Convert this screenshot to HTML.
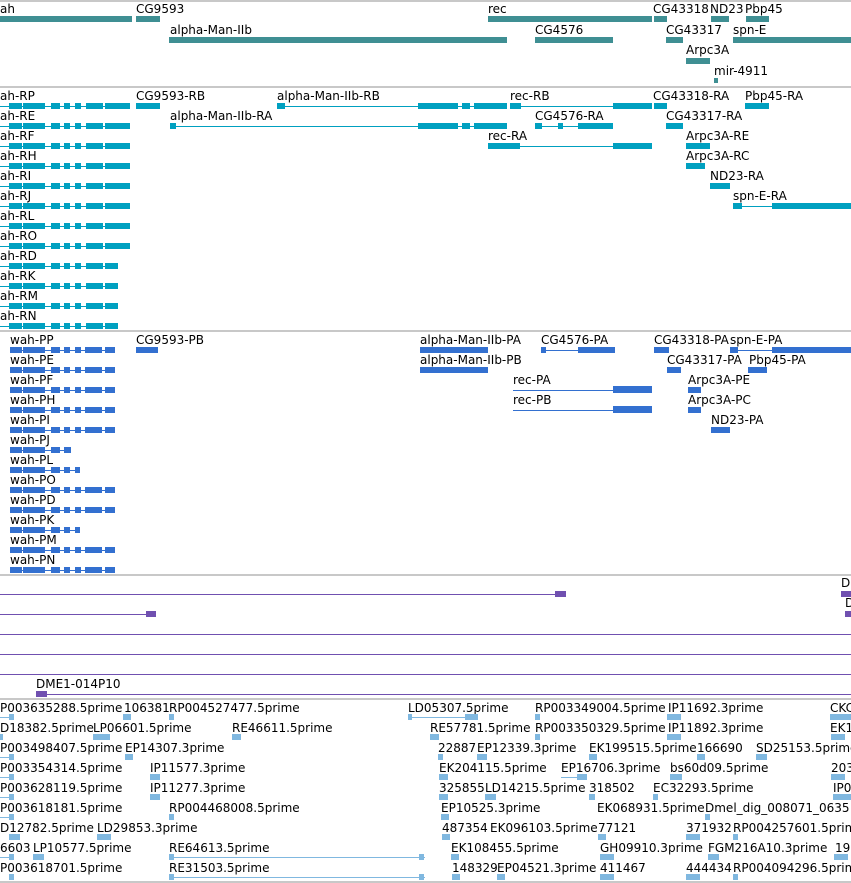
<!DOCTYPE html>
<html><head><meta charset="utf-8"><style>
body{margin:0;width:851px;height:883px;background:#fff;position:relative;overflow:hidden;font-family:"DejaVu Sans","Liberation Sans",sans-serif}
span{position:absolute;font-size:12px;line-height:14px;white-space:nowrap;color:#000}
i,u,hr{position:absolute;display:block;margin:0;border:0}
i{height:6px}
u{height:1px}
hr{height:2px;background:#c8c8c8;left:0;width:851px}
.a{background:#3f8f93}.b{background:#00a0c0}.c{background:#3370d0}.d{background:#7050b0}.e{background:#80b8e0}
</style></head><body>
<hr style="top:0">
<!-- section 1 genes -->
<span style="left:0;top:2px">ah</span><i class="a" style="left:0;top:16px;width:132px"></i>
<span style="left:136px;top:2px">CG9593</span><i class="a" style="left:136px;top:16px;width:24px"></i>
<span style="left:488px;top:2px">rec</span><i class="a" style="left:488px;top:16px;width:164px"></i>
<span style="left:653px;top:2px">CG43318</span><i class="a" style="left:654px;top:16px;width:13px"></i>
<span style="left:710px;top:2px">ND23</span><i class="a" style="left:711px;top:16px;width:18px"></i>
<span style="left:745px;top:2px">Pbp45</span><i class="a" style="left:746px;top:16px;width:23px"></i>
<span style="left:170px;top:23px">alpha-Man-IIb</span><i class="a" style="left:169px;top:37px;width:338px"></i>
<span style="left:535px;top:23px">CG4576</span><i class="a" style="left:535px;top:37px;width:78px"></i>
<span style="left:666px;top:23px">CG43317</span><i class="a" style="left:666px;top:37px;width:17px"></i>
<span style="left:733px;top:23px">spn-E</span><i class="a" style="left:733px;top:37px;width:118px"></i>
<span style="left:686px;top:43px">Arpc3A</span><i class="a" style="left:686px;top:58px;width:24px"></i>
<span style="left:714px;top:64px">mir-4911</span><i class="a" style="left:714px;top:78px;width:4px;height:5px"></i>
<hr style="top:86px">
<!-- section 2 transcripts -->
<span style="left:0;top:89px">ah-RP</span>
<span style="left:0;top:109px">ah-RE</span>
<span style="left:0;top:129px">ah-RF</span>
<span style="left:0;top:149px">ah-RH</span>
<span style="left:0;top:169px">ah-RI</span>
<span style="left:0;top:189px">ah-RJ</span>
<span style="left:0;top:209px">ah-RL</span>
<span style="left:0;top:229px">ah-RO</span>
<span style="left:0;top:249px">ah-RD</span>
<span style="left:0;top:269px">ah-RK</span>
<span style="left:0;top:289px">ah-RM</span>
<span style="left:0;top:309px">ah-RN</span>
<!-- ah glyph rows -->
<div style="position:absolute;left:0;top:103px">
<u class="b" style="left:0;top:3px;width:130px"></u><i class="b" style="left:9px;width:13px"></i><i class="b" style="left:23px;width:22px"></i><i class="b" style="left:51px;width:9px"></i><i class="b" style="left:64px;width:6px"></i><i class="b" style="left:75px;width:6px"></i><i class="b" style="left:86px;width:17px"></i><i class="b" style="left:105px;width:25px"></i>
<u class="b" style="left:0;top:23px;width:130px"></u><i class="b" style="top:20px;left:9px;width:13px"></i><i class="b" style="top:20px;left:23px;width:22px"></i><i class="b" style="top:20px;left:51px;width:9px"></i><i class="b" style="top:20px;left:64px;width:6px"></i><i class="b" style="top:20px;left:75px;width:6px"></i><i class="b" style="top:20px;left:86px;width:17px"></i><i class="b" style="top:20px;left:105px;width:25px"></i>
<u class="b" style="left:0;top:43px;width:130px"></u><i class="b" style="top:40px;left:9px;width:13px"></i><i class="b" style="top:40px;left:23px;width:22px"></i><i class="b" style="top:40px;left:51px;width:9px"></i><i class="b" style="top:40px;left:64px;width:6px"></i><i class="b" style="top:40px;left:75px;width:6px"></i><i class="b" style="top:40px;left:86px;width:17px"></i><i class="b" style="top:40px;left:105px;width:25px"></i>
<u class="b" style="left:0;top:63px;width:130px"></u><i class="b" style="top:60px;left:9px;width:13px"></i><i class="b" style="top:60px;left:23px;width:22px"></i><i class="b" style="top:60px;left:51px;width:9px"></i><i class="b" style="top:60px;left:64px;width:6px"></i><i class="b" style="top:60px;left:75px;width:6px"></i><i class="b" style="top:60px;left:86px;width:17px"></i><i class="b" style="top:60px;left:105px;width:25px"></i>
<u class="b" style="left:0;top:83px;width:130px"></u><i class="b" style="top:80px;left:9px;width:13px"></i><i class="b" style="top:80px;left:23px;width:22px"></i><i class="b" style="top:80px;left:51px;width:9px"></i><i class="b" style="top:80px;left:64px;width:6px"></i><i class="b" style="top:80px;left:75px;width:6px"></i><i class="b" style="top:80px;left:86px;width:17px"></i><i class="b" style="top:80px;left:105px;width:25px"></i>
<u class="b" style="left:0;top:103px;width:130px"></u><i class="b" style="top:100px;left:9px;width:13px"></i><i class="b" style="top:100px;left:23px;width:22px"></i><i class="b" style="top:100px;left:51px;width:9px"></i><i class="b" style="top:100px;left:64px;width:6px"></i><i class="b" style="top:100px;left:75px;width:6px"></i><i class="b" style="top:100px;left:86px;width:17px"></i><i class="b" style="top:100px;left:105px;width:25px"></i>
<u class="b" style="left:0;top:123px;width:130px"></u><i class="b" style="top:120px;left:9px;width:13px"></i><i class="b" style="top:120px;left:23px;width:22px"></i><i class="b" style="top:120px;left:51px;width:9px"></i><i class="b" style="top:120px;left:64px;width:6px"></i><i class="b" style="top:120px;left:75px;width:6px"></i><i class="b" style="top:120px;left:86px;width:17px"></i><i class="b" style="top:120px;left:105px;width:25px"></i>
<u class="b" style="left:0;top:143px;width:130px"></u><i class="b" style="top:140px;left:9px;width:13px"></i><i class="b" style="top:140px;left:23px;width:22px"></i><i class="b" style="top:140px;left:51px;width:9px"></i><i class="b" style="top:140px;left:64px;width:6px"></i><i class="b" style="top:140px;left:75px;width:6px"></i><i class="b" style="top:140px;left:86px;width:17px"></i><i class="b" style="top:140px;left:105px;width:25px"></i>
<u class="b" style="left:0;top:163px;width:118px"></u><i class="b" style="top:160px;left:9px;width:13px"></i><i class="b" style="top:160px;left:23px;width:22px"></i><i class="b" style="top:160px;left:51px;width:9px"></i><i class="b" style="top:160px;left:64px;width:6px"></i><i class="b" style="top:160px;left:75px;width:6px"></i><i class="b" style="top:160px;left:86px;width:17px"></i><i class="b" style="top:160px;left:105px;width:13px"></i>
<u class="b" style="left:0;top:183px;width:118px"></u><i class="b" style="top:180px;left:9px;width:13px"></i><i class="b" style="top:180px;left:23px;width:22px"></i><i class="b" style="top:180px;left:51px;width:9px"></i><i class="b" style="top:180px;left:64px;width:6px"></i><i class="b" style="top:180px;left:75px;width:6px"></i><i class="b" style="top:180px;left:86px;width:17px"></i><i class="b" style="top:180px;left:105px;width:13px"></i>
<u class="b" style="left:0;top:203px;width:118px"></u><i class="b" style="top:200px;left:9px;width:13px"></i><i class="b" style="top:200px;left:23px;width:22px"></i><i class="b" style="top:200px;left:51px;width:9px"></i><i class="b" style="top:200px;left:64px;width:6px"></i><i class="b" style="top:200px;left:75px;width:6px"></i><i class="b" style="top:200px;left:86px;width:17px"></i><i class="b" style="top:200px;left:105px;width:13px"></i>
<u class="b" style="left:0;top:223px;width:118px"></u><i class="b" style="top:220px;left:9px;width:13px"></i><i class="b" style="top:220px;left:23px;width:22px"></i><i class="b" style="top:220px;left:51px;width:9px"></i><i class="b" style="top:220px;left:64px;width:6px"></i><i class="b" style="top:220px;left:75px;width:6px"></i><i class="b" style="top:220px;left:86px;width:17px"></i><i class="b" style="top:220px;left:105px;width:13px"></i>
</div>
<span style="left:136px;top:89px">CG9593-RB</span><i class="b" style="left:136px;top:103px;width:24px"></i>
<span style="left:277px;top:89px">alpha-Man-IIb-RB</span><u class="b" style="left:277px;top:106px;width:230px"></u><i class="b" style="left:277px;top:103px;width:8px"></i><i class="b" style="left:418px;top:103px;width:40px"></i><i class="b" style="left:462px;top:103px;width:8px"></i><i class="b" style="left:474px;top:103px;width:33px"></i>
<span style="left:510px;top:89px">rec-RB</span><u class="b" style="left:510px;top:106px;width:142px"></u><i class="b" style="left:510px;top:103px;width:11px"></i><i class="b" style="left:613px;top:103px;width:39px"></i><i class="b" style="left:654px;top:103px;width:13px"></i>
<span style="left:653px;top:89px">CG43318-RA</span>
<span style="left:745px;top:89px">Pbp45-RA</span><i class="b" style="left:745px;top:103px;width:24px"></i>
<span style="left:170px;top:109px">alpha-Man-IIb-RA</span><u class="b" style="left:170px;top:126px;width:337px"></u><i class="b" style="left:170px;top:123px;width:6px"></i><i class="b" style="left:418px;top:123px;width:40px"></i><i class="b" style="left:462px;top:123px;width:8px"></i><i class="b" style="left:474px;top:123px;width:33px"></i>
<span style="left:535px;top:109px">CG4576-RA</span><u class="b" style="left:535px;top:126px;width:78px"></u><i class="b" style="left:535px;top:123px;width:7px"></i><i class="b" style="left:558px;top:123px;width:5px"></i><i class="b" style="left:578px;top:123px;width:35px"></i>
<span style="left:666px;top:109px">CG43317-RA</span><i class="b" style="left:666px;top:123px;width:17px"></i>
<span style="left:488px;top:129px">rec-RA</span><u class="b" style="left:488px;top:146px;width:164px"></u><i class="b" style="left:488px;top:143px;width:32px"></i><i class="b" style="left:613px;top:143px;width:39px"></i>
<span style="left:686px;top:129px">Arpc3A-RE</span><i class="b" style="left:686px;top:143px;width:24px"></i>
<span style="left:686px;top:149px">Arpc3A-RC</span><i class="b" style="left:686px;top:163px;width:19px"></i>
<span style="left:710px;top:169px">ND23-RA</span><i class="b" style="left:710px;top:183px;width:20px"></i>
<span style="left:733px;top:189px">spn-E-RA</span><u class="b" style="left:733px;top:206px;width:118px"></u><i class="b" style="left:733px;top:203px;width:9px"></i><i class="b" style="left:772px;top:203px;width:79px"></i>
<hr style="top:330px">
<!-- section 3 -->
<span style="left:10px;top:333px">wah-PP</span>
<span style="left:10px;top:353px">wah-PE</span>
<span style="left:10px;top:373px">wah-PF</span>
<span style="left:10px;top:393px">wah-PH</span>
<span style="left:10px;top:413px">wah-PI</span>
<span style="left:10px;top:433px">wah-PJ</span>
<span style="left:10px;top:453px">wah-PL</span>
<span style="left:10px;top:473px">wah-PO</span>
<span style="left:10px;top:493px">wah-PD</span>
<span style="left:10px;top:513px">wah-PK</span>
<span style="left:10px;top:533px">wah-PM</span>
<span style="left:10px;top:553px">wah-PN</span>
<div style="position:absolute;left:10px;top:347px">
<u class="c" style="top:3px;width:105px"></u><i class="c" style="width:12px"></i><i class="c" style="left:13px;width:22px"></i><i class="c" style="left:41px;width:9px"></i><i class="c" style="left:54px;width:6px"></i><i class="c" style="left:65px;width:6px"></i><i class="c" style="left:75px;width:17px"></i><i class="c" style="left:95px;width:10px"></i>
<u class="c" style="top:23px;width:105px"></u><i class="c" style="top:20px;width:12px"></i><i class="c" style="top:20px;left:13px;width:22px"></i><i class="c" style="top:20px;left:41px;width:9px"></i><i class="c" style="top:20px;left:54px;width:6px"></i><i class="c" style="top:20px;left:65px;width:6px"></i><i class="c" style="top:20px;left:75px;width:17px"></i><i class="c" style="top:20px;left:95px;width:10px"></i>
<u class="c" style="top:43px;width:105px"></u><i class="c" style="top:40px;width:12px"></i><i class="c" style="top:40px;left:13px;width:22px"></i><i class="c" style="top:40px;left:41px;width:9px"></i><i class="c" style="top:40px;left:54px;width:6px"></i><i class="c" style="top:40px;left:65px;width:6px"></i><i class="c" style="top:40px;left:75px;width:17px"></i><i class="c" style="top:40px;left:95px;width:10px"></i>
<u class="c" style="top:63px;width:105px"></u><i class="c" style="top:60px;width:12px"></i><i class="c" style="top:60px;left:13px;width:22px"></i><i class="c" style="top:60px;left:41px;width:9px"></i><i class="c" style="top:60px;left:54px;width:6px"></i><i class="c" style="top:60px;left:65px;width:6px"></i><i class="c" style="top:60px;left:75px;width:17px"></i><i class="c" style="top:60px;left:95px;width:10px"></i>
<u class="c" style="top:83px;width:105px"></u><i class="c" style="top:80px;width:12px"></i><i class="c" style="top:80px;left:13px;width:22px"></i><i class="c" style="top:80px;left:41px;width:9px"></i><i class="c" style="top:80px;left:54px;width:6px"></i><i class="c" style="top:80px;left:65px;width:6px"></i><i class="c" style="top:80px;left:75px;width:17px"></i><i class="c" style="top:80px;left:95px;width:10px"></i>
<u class="c" style="top:103px;width:61px"></u><i class="c" style="top:100px;width:12px"></i><i class="c" style="top:100px;left:13px;width:22px"></i><i class="c" style="top:100px;left:41px;width:9px"></i><i class="c" style="top:100px;left:54px;width:7px"></i>
<u class="c" style="top:123px;width:70px"></u><i class="c" style="top:120px;width:12px"></i><i class="c" style="top:120px;left:13px;width:22px"></i><i class="c" style="top:120px;left:41px;width:9px"></i><i class="c" style="top:120px;left:54px;width:6px"></i><i class="c" style="top:120px;left:65px;width:5px"></i>
<u class="c" style="top:143px;width:105px"></u><i class="c" style="top:140px;width:12px"></i><i class="c" style="top:140px;left:13px;width:22px"></i><i class="c" style="top:140px;left:41px;width:9px"></i><i class="c" style="top:140px;left:54px;width:6px"></i><i class="c" style="top:140px;left:65px;width:6px"></i><i class="c" style="top:140px;left:75px;width:17px"></i><i class="c" style="top:140px;left:95px;width:10px"></i>
<u class="c" style="top:163px;width:105px"></u><i class="c" style="top:160px;width:12px"></i><i class="c" style="top:160px;left:13px;width:22px"></i><i class="c" style="top:160px;left:41px;width:9px"></i><i class="c" style="top:160px;left:54px;width:6px"></i><i class="c" style="top:160px;left:65px;width:6px"></i><i class="c" style="top:160px;left:75px;width:17px"></i><i class="c" style="top:160px;left:95px;width:10px"></i>
<u class="c" style="top:183px;width:70px"></u><i class="c" style="top:180px;width:12px"></i><i class="c" style="top:180px;left:13px;width:22px"></i><i class="c" style="top:180px;left:41px;width:9px"></i><i class="c" style="top:180px;left:54px;width:6px"></i><i class="c" style="top:180px;left:65px;width:5px"></i>
<u class="c" style="top:203px;width:105px"></u><i class="c" style="top:200px;width:12px"></i><i class="c" style="top:200px;left:13px;width:22px"></i><i class="c" style="top:200px;left:41px;width:9px"></i><i class="c" style="top:200px;left:54px;width:6px"></i><i class="c" style="top:200px;left:65px;width:6px"></i><i class="c" style="top:200px;left:75px;width:17px"></i><i class="c" style="top:200px;left:95px;width:10px"></i>
<u class="c" style="top:223px;width:105px"></u><i class="c" style="top:220px;width:12px"></i><i class="c" style="top:220px;left:13px;width:22px"></i><i class="c" style="top:220px;left:41px;width:9px"></i><i class="c" style="top:220px;left:54px;width:6px"></i><i class="c" style="top:220px;left:65px;width:6px"></i><i class="c" style="top:220px;left:75px;width:17px"></i><i class="c" style="top:220px;left:95px;width:10px"></i>
</div>
<span style="left:136px;top:333px">CG9593-PB</span><i class="c" style="left:136px;top:347px;width:22px"></i>
<span style="left:420px;top:333px">alpha-Man-IIb-PA</span><i class="c" style="left:420px;top:347px;width:68px"></i>
<span style="left:541px;top:333px">CG4576-PA</span><u class="c" style="left:541px;top:350px;width:74px"></u><i class="c" style="left:541px;top:347px;width:5px"></i><i class="c" style="left:578px;top:347px;width:37px"></i>
<span style="left:654px;top:333px">CG43318-PA</span><i class="c" style="left:654px;top:347px;width:15px"></i>
<span style="left:730px;top:333px">spn-E-PA</span><u class="c" style="left:730px;top:350px;width:121px"></u><i class="c" style="left:730px;top:347px;width:8px"></i><i class="c" style="left:772px;top:347px;width:79px"></i>
<span style="left:420px;top:353px">alpha-Man-IIb-PB</span><i class="c" style="left:420px;top:367px;width:68px"></i>
<span style="left:667px;top:353px">CG43317-PA</span><i class="c" style="left:667px;top:367px;width:14px"></i>
<span style="left:749px;top:353px">Pbp45-PA</span><i class="c" style="left:748px;top:367px;width:19px"></i>
<span style="left:513px;top:373px">rec-PA</span><u class="c" style="left:513px;top:390px;width:139px"></u><i class="c" style="left:613px;top:386px;width:39px;height:7px"></i>
<span style="left:688px;top:373px">Arpc3A-PE</span><i class="c" style="left:688px;top:387px;width:13px"></i>
<span style="left:513px;top:393px">rec-PB</span><u class="c" style="left:513px;top:410px;width:139px"></u><i class="c" style="left:613px;top:406px;width:39px;height:7px"></i>
<span style="left:688px;top:393px">Arpc3A-PC</span><i class="c" style="left:688px;top:407px;width:13px"></i>
<span style="left:711px;top:413px">ND23-PA</span><i class="c" style="left:711px;top:427px;width:19px"></i>
<hr style="top:574px">
<!-- section 4 -->
<u class="d" style="left:0;top:594px;width:560px"></u><i class="d" style="left:555px;top:591px;width:11px"></i>
<span style="left:841px;top:576px">D</span><i class="d" style="left:841px;top:591px;width:10px"></i>
<u class="d" style="left:0;top:614px;width:150px"></u><i class="d" style="left:146px;top:611px;width:10px"></i>
<span style="left:845px;top:596px">D</span><i class="d" style="left:845px;top:611px;width:6px"></i>
<u class="d" style="left:0;top:634px;width:851px"></u>
<u class="d" style="left:0;top:654px;width:851px"></u>
<u class="d" style="left:0;top:674px;width:851px"></u>
<span style="left:36px;top:677px">DME1-014P10</span><u class="d" style="left:36px;top:694px;width:815px"></u><i class="d" style="left:36px;top:691px;width:11px"></i>
<hr style="top:698px">
<!-- section 5 -->
<span style="left:0;top:701px">P003635288.5prime</span><u class="e" style="left:0;top:717px;width:12px"></u><i class="e" style="left:9px;top:714px;width:5px"></i>
<span style="left:124px;top:701px">106381</span><i class="e" style="left:123px;top:714px;width:8px"></i>
<span style="left:169px;top:701px">RP004527477.5prime</span><i class="e" style="left:169px;top:714px;width:5px"></i>
<span style="left:408px;top:701px">LD05307.5prime</span><u class="e" style="left:408px;top:717px;width:70px"></u><i class="e" style="left:408px;top:714px;width:4px"></i><i class="e" style="left:465px;top:714px;width:13px"></i>
<span style="left:535px;top:701px">RP003349004.5prime</span><i class="e" style="left:535px;top:714px;width:5px"></i>
<span style="left:668px;top:701px">IP11692.3prime</span><i class="e" style="left:667px;top:714px;width:14px"></i>
<span style="left:830px;top:701px">CKC</span><i class="e" style="left:830px;top:714px;width:21px"></i>
<span style="left:0;top:721px">D18382.5prime</span><i class="e" style="left:0;top:734px;width:3px"></i>
<span style="left:93px;top:721px">LP06601.5prime</span><i class="e" style="left:93px;top:734px;width:17px"></i>
<span style="left:232px;top:721px">RE46611.5prime</span><i class="e" style="left:232px;top:734px;width:9px"></i>
<span style="left:430px;top:721px">RE57781.5prime</span><i class="e" style="left:430px;top:734px;width:9px"></i>
<span style="left:535px;top:721px">RP003350329.5prime</span><i class="e" style="left:535px;top:734px;width:5px"></i>
<span style="left:668px;top:721px">IP11892.3prime</span><i class="e" style="left:667px;top:734px;width:14px"></i>
<span style="left:830px;top:721px">EK1</span><i class="e" style="left:831px;top:734px;width:14px"></i>
<span style="left:0;top:741px">P003498407.5prime</span><u class="e" style="left:0;top:757px;width:12px"></u><i class="e" style="left:9px;top:754px;width:5px"></i>
<span style="left:125px;top:741px">EP14307.3prime</span><i class="e" style="left:125px;top:754px;width:8px"></i>
<span style="left:438px;top:741px">22887</span><i class="e" style="left:438px;top:754px;width:5px"></i>
<span style="left:477px;top:741px">EP12339.3prime</span><i class="e" style="left:477px;top:754px;width:10px"></i>
<span style="left:589px;top:741px">EK199515.5prime</span><i class="e" style="left:589px;top:754px;width:8px"></i>
<span style="left:697px;top:741px">166690</span><i class="e" style="left:697px;top:754px;width:8px"></i>
<span style="left:756px;top:741px">SD25153.5prime</span><i class="e" style="left:756px;top:754px;width:11px"></i>
<span style="left:0;top:761px">P003354314.5prime</span><u class="e" style="left:0;top:777px;width:12px"></u><i class="e" style="left:9px;top:774px;width:5px"></i>
<span style="left:150px;top:761px">IP11577.3prime</span><i class="e" style="left:150px;top:774px;width:10px"></i>
<span style="left:439px;top:761px">EK204115.5prime</span><i class="e" style="left:439px;top:774px;width:9px"></i>
<span style="left:561px;top:761px">EP16706.3prime</span><u class="e" style="left:561px;top:777px;width:26px"></u><i class="e" style="left:577px;top:774px;width:10px"></i>
<span style="left:670px;top:761px">bs60d09.5prime</span><i class="e" style="left:670px;top:774px;width:12px"></i>
<span style="left:831px;top:761px">203</span><i class="e" style="left:831px;top:774px;width:14px"></i>
<span style="left:0;top:781px">P003628119.5prime</span><u class="e" style="left:0;top:797px;width:12px"></u><i class="e" style="left:9px;top:794px;width:5px"></i>
<span style="left:150px;top:781px">IP11277.3prime</span><i class="e" style="left:150px;top:794px;width:10px"></i>
<span style="left:439px;top:781px">325855</span><i class="e" style="left:439px;top:794px;width:9px"></i>
<span style="left:485px;top:781px">LD14215.5prime</span><i class="e" style="left:485px;top:794px;width:11px"></i>
<span style="left:589px;top:781px">318502</span><i class="e" style="left:589px;top:794px;width:6px"></i>
<span style="left:653px;top:781px">EC32293.5prime</span><i class="e" style="left:653px;top:794px;width:5px"></i>
<span style="left:833px;top:781px">IP0</span><i class="e" style="left:833px;top:794px;width:18px"></i>
<span style="left:0;top:801px">P003618181.5prime</span><u class="e" style="left:0;top:817px;width:12px"></u><i class="e" style="left:9px;top:814px;width:5px"></i>
<span style="left:169px;top:801px">RP004468008.5prime</span><i class="e" style="left:169px;top:814px;width:5px"></i>
<span style="left:441px;top:801px">EP10525.3prime</span><i class="e" style="left:441px;top:814px;width:8px"></i>
<span style="left:597px;top:801px">EK068931.5prime</span>
<span style="left:705px;top:801px">Dmel_dig_008071_0635</span><i class="e" style="left:705px;top:814px;width:5px"></i>
<span style="left:0;top:821px">D12782.5prime</span><i class="e" style="left:9px;top:834px;width:11px"></i>
<span style="left:97px;top:821px">LD29853.3prime</span><i class="e" style="left:97px;top:834px;width:14px"></i>
<span style="left:442px;top:821px">487354</span><i class="e" style="left:442px;top:834px;width:8px"></i>
<span style="left:490px;top:821px">EK096103.5prime</span>
<span style="left:598px;top:821px">77121</span><i class="e" style="left:598px;top:834px;width:8px"></i>
<span style="left:686px;top:821px">371932</span><i class="e" style="left:686px;top:834px;width:14px"></i>
<span style="left:733px;top:821px">RP004257601.5prim</span><i class="e" style="left:733px;top:834px;width:5px"></i>
<span style="left:0;top:841px">6603</span><u class="e" style="left:0;top:857px;width:12px"></u><i class="e" style="left:9px;top:854px;width:5px"></i>
<span style="left:33px;top:841px">LP10577.5prime</span><i class="e" style="left:33px;top:854px;width:11px"></i>
<span style="left:169px;top:841px">RE64613.5prime</span><u class="e" style="left:169px;top:857px;width:256px"></u><i class="e" style="left:169px;top:854px;width:5px"></i><i class="e" style="left:419px;top:854px;width:5px"></i>
<span style="left:451px;top:841px">EK108455.5prime</span><i class="e" style="left:451px;top:854px;width:8px"></i>
<span style="left:600px;top:841px">GH09910.3prime</span><i class="e" style="left:600px;top:854px;width:14px"></i>
<span style="left:708px;top:841px">FGM216A10.3prime</span><i class="e" style="left:708px;top:854px;width:11px"></i>
<span style="left:835px;top:841px">19</span><i class="e" style="left:834px;top:854px;width:14px"></i>
<span style="left:0;top:861px">P003618701.5prime</span><i class="e" style="left:9px;top:874px;width:5px"></i>
<span style="left:169px;top:861px">RE31503.5prime</span><u class="e" style="left:169px;top:877px;width:256px"></u><i class="e" style="left:169px;top:874px;width:5px"></i><i class="e" style="left:419px;top:874px;width:5px"></i>
<u class="e" style="left:400px;top:857px;width:22px"></u><u class="e" style="left:400px;top:877px;width:22px"></u>
<span style="left:452px;top:861px">148329</span><i class="e" style="left:452px;top:874px;width:8px"></i>
<span style="left:497px;top:861px">EP04521.3prime</span><i class="e" style="left:497px;top:874px;width:8px"></i>
<span style="left:600px;top:861px">411467</span><i class="e" style="left:600px;top:874px;width:14px"></i>
<span style="left:686px;top:861px">444434</span><i class="e" style="left:686px;top:874px;width:14px"></i>
<span style="left:733px;top:861px">RP004094296.5prim</span><i class="e" style="left:733px;top:874px;width:5px"></i>
<hr style="top:881px">
</body></html>
